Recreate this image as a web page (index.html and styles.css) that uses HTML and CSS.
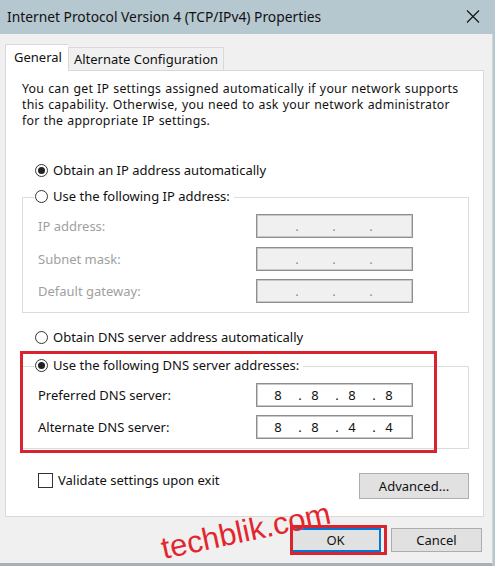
FILE: index.html
```html
<!DOCTYPE html>
<html>
<head>
<meta charset="utf-8">
<link rel="stylesheet" href="styles.css">
</head>
<body>
<div class="window">
  <div class="titlebar">
    <span class="title">Internet Protocol Version 4 (TCP/IPv4) Properties</span>
    <svg class="close" width="14" height="13" viewBox="0 0 14 13"><path d="M1 0.5 L13 12.5 M13 0.5 L1 12.5" stroke="#111" stroke-width="1.1" fill="none"/></svg>
  </div>
  <div class="content">
    <div class="tabs">
      <div class="tab active">General</div>
      <div class="tab">Alternate Configuration</div>
    </div>
    <div class="panel">
      <div class="desc">
        <div class="line">You can get IP settings assigned automatically if your network supports</div>
        <div class="line">this capability. Otherwise, you need to ask your network administrator</div>
        <div class="line">for the appropriate IP settings.</div>
      </div>
      <div class="option first"><span class="radio checked"></span>Obtain an IP address automatically</div>
      <div class="group ipgroup">
        <div class="legend"><span class="radio"></span>Use the following IP address:</div>
        <div class="fields">
          <span class="label disabled">IP address:</span>
          <div class="ipbox empty"><span class="seg"></span><span class="dot">.</span><span class="seg"></span><span class="dot">.</span><span class="seg"></span><span class="dot">.</span><span class="seg"></span></div>
          <span class="label disabled">Subnet mask:</span>
          <div class="ipbox empty"><span class="seg"></span><span class="dot">.</span><span class="seg"></span><span class="dot">.</span><span class="seg"></span><span class="dot">.</span><span class="seg"></span></div>
          <span class="label disabled">Default gateway:</span>
          <div class="ipbox empty"><span class="seg"></span><span class="dot">.</span><span class="seg"></span><span class="dot">.</span><span class="seg"></span><span class="dot">.</span><span class="seg"></span></div>
        </div>
      </div>
      <div class="option dnsauto"><span class="radio"></span>Obtain DNS server address automatically</div>
      <div class="group dnsgroup">
        <div class="legend"><span class="radio checked"></span>Use the following DNS server addresses:</div>
        <div class="fields">
          <span class="label">Preferred DNS server:</span>
          <div class="ipbox"><span class="seg">8</span><span class="dot">.</span><span class="seg">8</span><span class="dot">.</span><span class="seg">8</span><span class="dot">.</span><span class="seg">8</span></div>
          <span class="label">Alternate DNS server:</span>
          <div class="ipbox"><span class="seg">8</span><span class="dot">.</span><span class="seg">8</span><span class="dot">.</span><span class="seg">4</span><span class="dot">.</span><span class="seg">4</span></div>
        </div>
      </div>
      <div class="bottomrow">
        <div class="check"><span class="checkbox"></span>Validate settings upon exit</div>
        <button class="btn advanced">Advanced...</button>
      </div>
    </div>
    <div class="buttons">
      <button class="btn ok">OK</button>
      <button class="btn cancel">Cancel</button>
    </div>
  </div>
  <div class="mark dnsmark"></div>
  <div class="mark okmark"></div>
  <div class="watermark">techblik.com</div>
</div>
</body>
</html>
```
FILE: styles.css
```css
* { box-sizing: border-box; }
html, body { margin: 0; padding: 0; }
body {
  width: 495px;
  height: 566px;
  overflow: hidden;
  background: #b5c7cf;
  font-family: "Noto Sans", "Open Sans", sans-serif;
  font-size: 13px;
  color: #111;
}
.window {
  position: relative;
  width: 495px;
  height: 566px;
  display: flex;
  flex-direction: column;
}
.titlebar {
  height: 34px;
  flex: none;
  background: #b5c7cf;
  display: flex;
  align-items: center;
  justify-content: space-between;
  padding: 0 15px 0 7px;
}
.title {
  font-size: 13.8px;
  line-height: 16px;
  color: #111;
  margin-top: -1px;
}
.close { display: block; margin-top: -1px; }
.content {
  flex: 1;
  background: #f0f0f0;
  padding: 10px 10px 0 5px;
  border-right: 1px solid #cfd6d9;
  border-bottom: 3px solid #a9b0b3;
  margin-right: 2px;
}
.tabs {
  display: flex;
  align-items: flex-end;
  height: 26px;
}
.tab {
  height: 23px;
  border: 1px solid #d9d9d9;
  border-bottom: none;
  padding: 0 5px;
  line-height: 22px;
  background: #f0f0f0;
  color: #111;
}
.tab.active {
  position: relative;
  z-index: 1;
  height: 27px;
  margin-bottom: -1px;
  background: #fff;
  padding: 0 6px 0 8px;
  line-height: 24px;
  border-right: none;
}
.panel {
  width: 479px;
  background: #fff;
  border: 1px solid #d9d9d9;
  padding: 10px 14px 17px 16px;
  display: flex;
  flex-direction: column;
}
.desc {
  display: flex;
  flex-direction: column;
  gap: 1px;
}
.line {
  font-size: 12.3px;
  letter-spacing: 0.25px;
  word-spacing: 0.6px;
  line-height: 15px;
  height: 15px;
  white-space: nowrap;
}
.option {
  display: flex;
  align-items: center;
  height: 16px;
  line-height: 16px;
  margin-left: 13px;
}
.option.first { margin-top: 34px; }
.option.dnsauto { margin-top: 16px; }
.radio {
  width: 13px;
  height: 13px;
  border: 1px solid #333;
  border-radius: 50%;
  background: #fff;
  margin-right: 5px;
  flex: none;
  display: flex;
  align-items: center;
  justify-content: center;
}
.radio.checked::after {
  content: "";
  width: 7px;
  height: 7px;
  border-radius: 50%;
  background: #222;
}
.group {
  border: 1px solid #dcdcdc;
  padding: 0 55px 9px 15px;
}
.ipgroup { margin-top: 19px; }
.dnsgroup { margin-top: 21px; }
.legend {
  display: flex;
  align-items: center;
  width: max-content;
  height: 16px;
  line-height: 16px;
  margin: -10px 0 0 -4px;
  padding: 0 4px 0 1px;
  background: #fff;
}
.fields {
  margin-top: 10px;
  display: grid;
  grid-template-columns: 1fr 157px;
  row-gap: 8.5px;
  align-items: center;
}
.dnsgroup .fields { row-gap: 8px; }
.label { line-height: 16px; }
.label.disabled { color: #a0a0a0; }
.ipbox {
  height: 24px;
  border: 1px solid #8e8e8e;
  box-shadow: inset 0 0 0 1px #c9c9c9;
  background: #fff;
  display: flex;
  align-items: center;
  padding-left: 16px;
  line-height: 16px;
}
.ipbox.empty {
  background: #f0f0f0;
  color: #8a8a8a;
  padding-left: 13px;
}
.seg { width: 10px; text-align: center; }
.dot { width: 10px; text-align: center; margin: 0 5px 0 12px; }
.bottomrow {
  margin-top: 23px;
  display: flex;
  justify-content: space-between;
  align-items: flex-start;
}
.check {
  display: flex;
  align-items: center;
  height: 16px;
  line-height: 16px;
  margin-left: 16px;
}
.checkbox {
  width: 15px;
  height: 15px;
  border: 1px solid #333;
  background: #fff;
  margin-right: 5px;
}
.btn {
  font-family: inherit;
  font-size: 13px;
  color: #111;
  background: #e1e1e1;
  border: 1px solid #adadad;
  padding: 0;
  margin: 0;
}
.advanced {
  width: 110px;
  height: 26px;
  margin-top: 1px;
}
.buttons {
  display: flex;
  justify-content: flex-end;
  gap: 10px;
  margin-top: 11px;
}
.ok, .cancel {
  width: 91px;
  height: 24px;
}
.ok {
  border: 2px solid #0078d7;
}
.mark {
  position: absolute;
  border: 3px solid #d9232e;
}
.dnsmark {
  left: 20px;
  top: 351px;
  width: 417px;
  height: 102px;
}
.okmark {
  left: 290px;
  top: 525px;
  width: 97px;
  height: 30px;
}
.watermark {
  position: absolute;
  left: 164px;
  top: 536px;
  font-family: "Liberation Sans", sans-serif;
  font-size: 31px;
  line-height: 26px;
  height: 26px;
  color: #e3262d;
  transform-origin: 0 23.7px;
  transform: rotate(-12deg);
  white-space: nowrap;
}
```
